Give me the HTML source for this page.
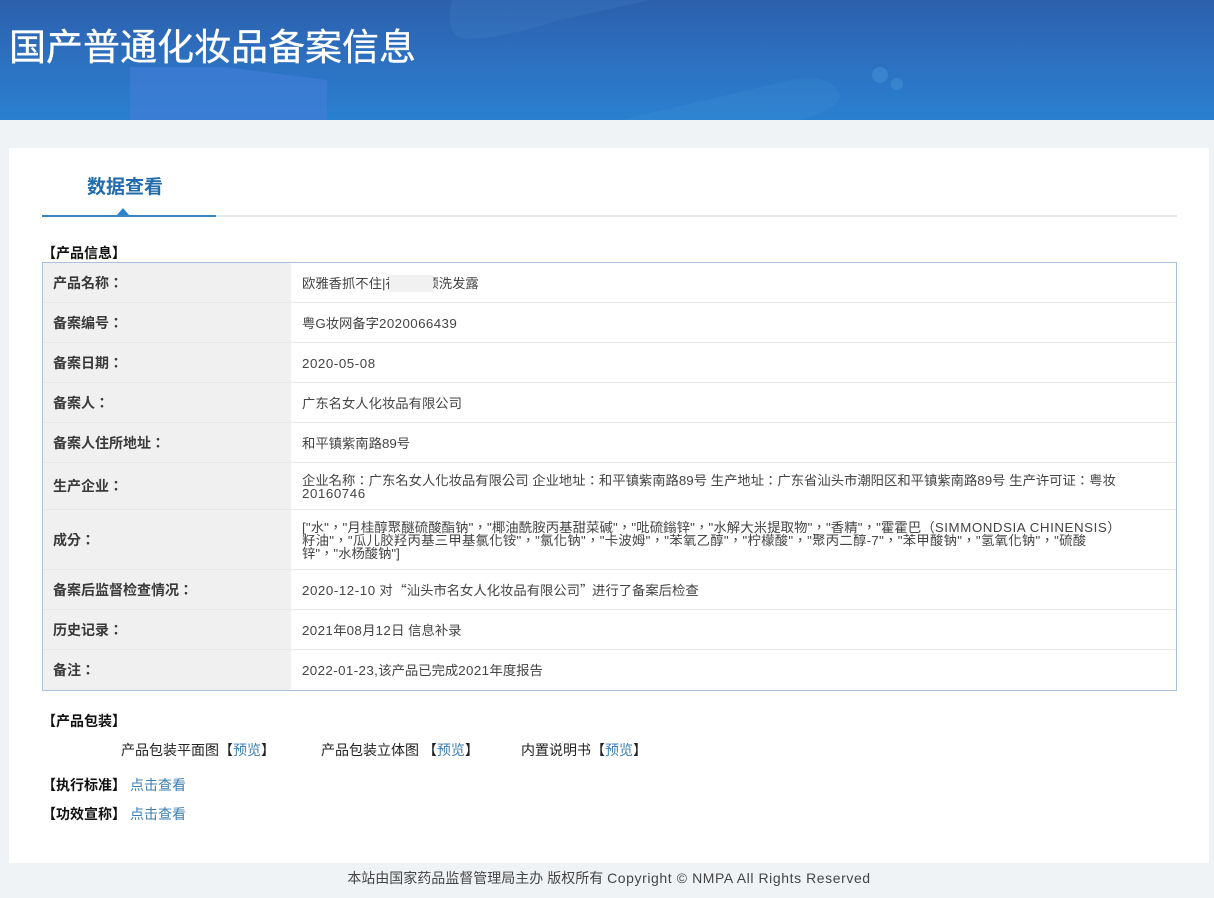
<!DOCTYPE html>
<html lang="zh">
<head>
<meta charset="utf-8">
<title>国产普通化妆品备案信息</title>
<style>
html,body{margin:0;padding:0}
body{width:1214px;height:898px;position:relative;overflow:hidden;background:#f0f3f6;font-family:"Liberation Sans","Noto Sans CJK SC",sans-serif;font-size:13.33px;color:#333}
.abs{position:absolute;white-space:nowrap}
#hd{position:absolute;left:0;top:0;width:1214px;height:120px;overflow:hidden;background:linear-gradient(180deg,#2c60ad 0%,#2d70c0 50%,#2a80d0 100%)}
#title{position:absolute;left:9px;top:24px;font-size:37px;line-height:48px;color:#fff;white-space:nowrap;-webkit-text-stroke:.3px #fff}
#card{position:absolute;left:9px;top:148px;width:1200px;height:715px;background:#fff}
#tab{position:absolute;left:87px;top:175px;font-size:19px;line-height:26px;font-weight:bold;color:#1f6bab}
#line{position:absolute;left:42px;top:215px;width:1135px;height:2px;background:#e4e6e9}
#line2{position:absolute;left:42px;top:215px;width:174px;height:2px;background:#3a84bf}
#tri{position:absolute;left:117px;top:208px;width:0;height:0;border-left:6px solid transparent;border-right:6px solid transparent;border-bottom:7px solid #2a83cf}
#tbl{position:absolute;left:42px;top:262px;width:1133px;height:427px;border:1px solid #a9c0da;background:#fff}
.r{position:absolute;left:0;width:1133px;border-bottom:1px solid #e8e8e8;box-sizing:border-box}
.r:last-child{border-bottom:0}
.k{position:absolute;left:0;top:0;bottom:0;width:248px;box-sizing:border-box;background:#f0f0f0;display:flex;align-items:center;padding-left:10px;font-size:14px;font-weight:bold;color:#3a3a3a;font-family:"Liberation Sans","Noto Sans CJK TC",sans-serif}
.v{position:absolute;left:259px;top:0;bottom:0;width:830px;display:flex;align-items:center;padding-top:1px;box-sizing:border-box;line-height:13px;color:#444;white-space:nowrap}
.n{letter-spacing:.4px}
.n2{letter-spacing:.55px}
.tc{font-family:"Liberation Sans","Noto Sans CJK TC",sans-serif}
.q{font-family:"Noto Sans CJK SC",sans-serif}
h4{position:absolute;margin:0;left:42px;font-size:14px;line-height:18px;font-weight:bold;color:#111;white-space:nowrap}
a{color:#3c7fb5;text-decoration:none}
#foot{position:absolute;left:0;width:1214px;top:868px;text-align:center;font-size:14px;line-height:20px;color:#444;padding-left:4px;box-sizing:border-box}
#foot span{letter-spacing:.58px}
.t{position:absolute;top:741px;line-height:18px;font-size:14px;color:#222;white-space:nowrap}
</style>
</head>
<body>
<div id="hd">
<svg width="1214" height="120" style="position:absolute;left:0;top:0">
<path d="M130 67 L225 67 L327 80 L327 120 L130 120Z" fill="#3f7dd6" opacity=".75"/>
<path d="M620 120 L770 85 Q830 68 840 95 Q838 110 800 120Z" fill="#4a9ad8" opacity=".18"/>
<ellipse cx="880" cy="75" rx="8" ry="8" fill="#4a95d8" opacity=".45"/>
<ellipse cx="897" cy="84" rx="6" ry="6" fill="#4a95d8" opacity=".45"/>
<path d="M452 0 H650 L560 20 Q490 42 460 38 Q445 30 452 0Z" fill="#4a8ccb" opacity=".2"/>
</svg>
<div id="title">国产普通化妆品备案信息</div>
</div>
<div id="card"></div>
<div id="tab">数据查看</div>
<div id="line"></div><div id="line2"></div><div id="tri"></div>
<h4 style="top:244px">【产品信息】</h4>
<div id="tbl">
<div class="r" style="top:0;height:40px"><div class="k" lang="zh-Hant">产品名称：</div><div class="v">欧雅香抓不住|祛屑柔顺洗发露</div></div>
<div class="r" style="top:40px;height:40px"><div class="k" lang="zh-Hant">备案编号：</div><div class="v"><span>粤G妆网备字<span class="n">2020066439</span></span></div></div>
<div class="r" style="top:80px;height:40px"><div class="k" lang="zh-Hant">备案日期：</div><div class="v"><span class="n2">2020-05-08</span></div></div>
<div class="r" style="top:120px;height:40px"><div class="k" lang="zh-Hant">备案人：</div><div class="v">广东名女人化妆品有限公司</div></div>
<div class="r" style="top:160px;height:40px"><div class="k" lang="zh-Hant">备案人住所地址：</div><div class="v">和平镇紫南路89号</div></div>
<div class="r" style="top:200px;height:47px"><div class="k" lang="zh-Hant">生产企业：</div><div class="v tc" lang="zh-Hant"><span>企业名称：广东名女人化妆品有限公司 企业地址：和平镇紫南路89号 生产地址：广东省汕头市潮阳区和平镇紫南路89号 生产许可证：粤妆<br><span class="n2">20160746</span></span></div></div>
<div class="r" style="top:247px;height:60px"><div class="k" lang="zh-Hant">成分：</div><div class="v tc" lang="zh-Hant"><span><span style="letter-spacing:.14px">["水"，"月桂醇聚醚硫酸酯钠"，"椰油酰胺丙基甜菜碱"，"吡硫鎓锌"，"水解大米提取物"，"香精"，"霍霍巴（<span class="n2">SIMMONDSIA CHINENSIS</span>）</span><br><span style="letter-spacing:.3px">籽油"，"瓜儿胶羟丙基三甲基氯化铵"，"氯化钠"，"卡波姆"，"苯氧乙醇"，"柠檬酸"，"聚丙二醇-7"，"苯甲酸钠"，"氢氧化钠"，"硫酸</span><br>锌"，"水杨酸钠"]</span></div></div>
<div class="r" style="top:307px;height:40px"><div class="k" lang="zh-Hant">备案后监督检查情况：</div><div class="v"><span><span class="n2">2020-12-10</span> 对 <span class="q" style="margin-left:-3px">“</span>汕头市名女人化妆品有限公司<span class="q" style="margin-right:-5px">”</span> 进行了备案后检查</span></div></div>
<div class="r" style="top:347px;height:40px"><div class="k" lang="zh-Hant">历史记录：</div><div class="v"><span><span class="n">2021</span>年<span class="n">08</span>月<span class="n">12</span>日 信息补录</span></div></div>
<div class="r" style="top:387px;height:40px"><div class="k" lang="zh-Hant">备注：</div><div class="v"><span><span class="n">2022-01-23,</span>该产品已完成<span class="n">2021</span>年度报告</span></div></div>
</div>
<div class="abs" style="left:389px;top:275px;width:44px;height:17px;background:#f1f1f1"></div>
<h4 style="top:712px">【产品包装】</h4>
<div class="t" style="left:121px">产品包装平面图【<a href="#">预览</a>】</div>
<div class="t" style="left:321px">产品包装立体图 【<a href="#">预览</a>】</div>
<div class="t" style="left:521px">内置说明书【<a href="#">预览</a>】</div>
<h4 style="top:776px">【执行标准】</h4>
<a class="abs" href="#" style="left:130px;top:776px;line-height:18px;font-size:14px">点击查看</a>
<h4 style="top:805px">【功效宣称】</h4>
<a class="abs" href="#" style="left:130px;top:805px;line-height:18px;font-size:14px">点击查看</a>
<div id="foot">本站由国家药品监督管理局主办 版权所有 <span>Copyright © NMPA All Rights Reserved</span></div>
</body>
</html>
